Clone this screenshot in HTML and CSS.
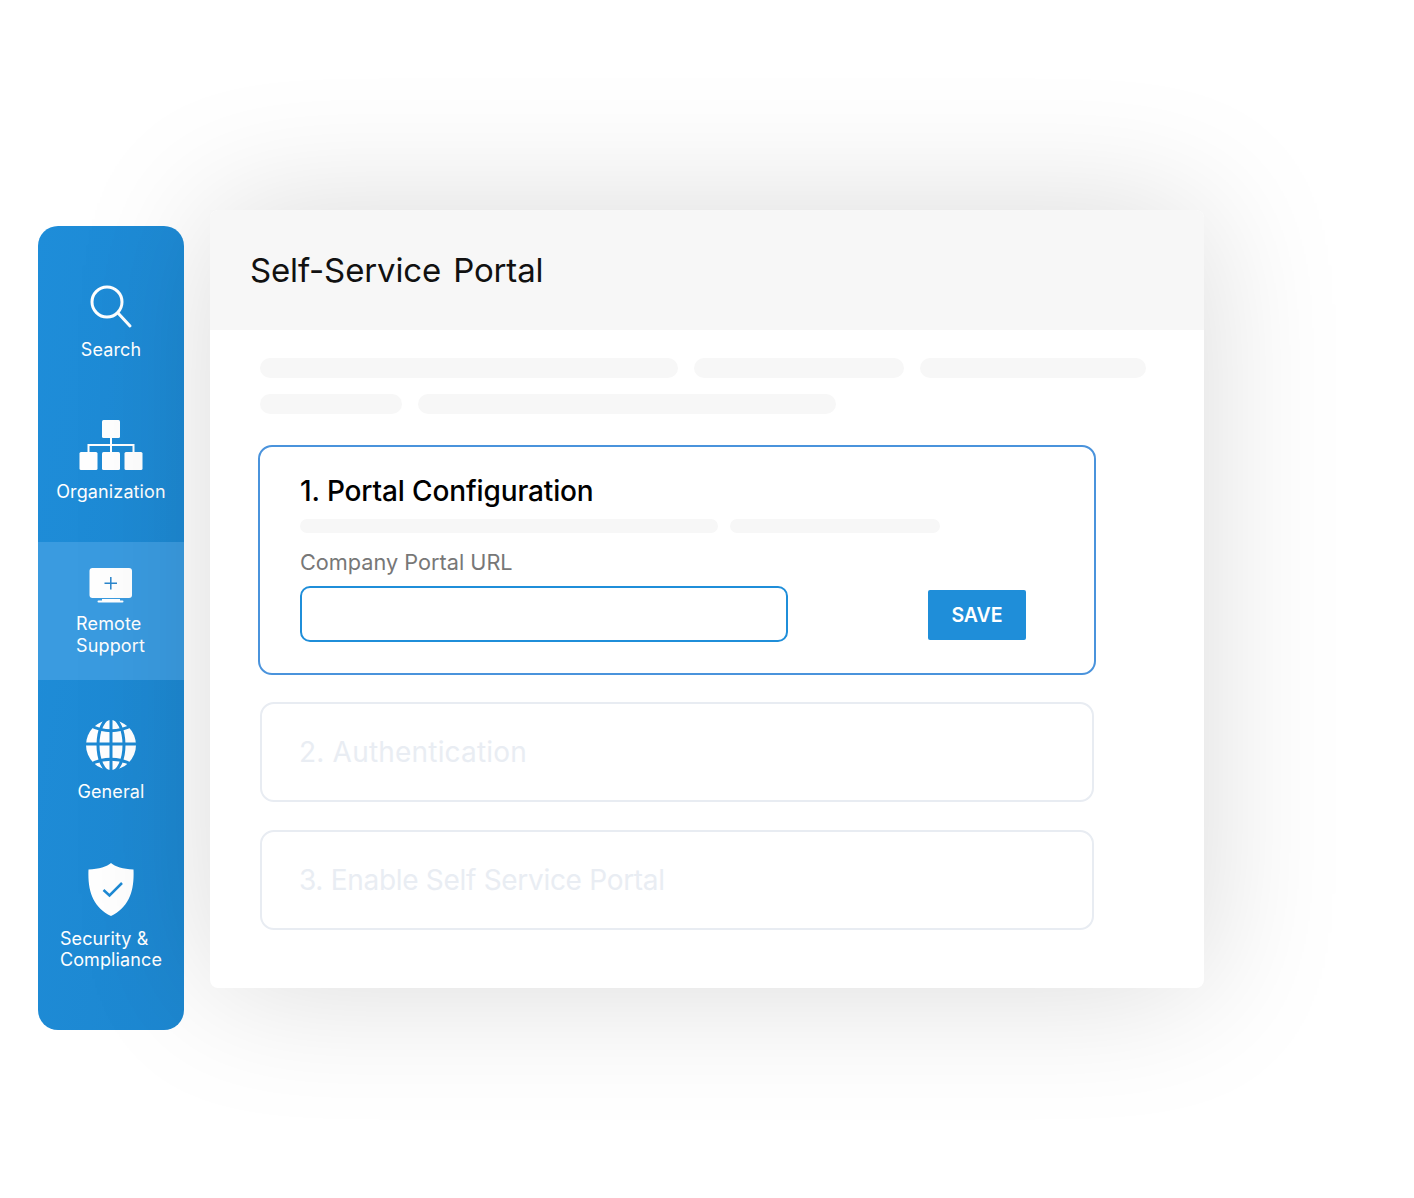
FILE: index.html
```html
<!DOCTYPE html>
<html lang="en">
<head>
    <meta charset="UTF-8">
    <title>Self-Service Portal</title>
    <meta name="viewport" content="width=device-width, initial-scale=1.0">
    <link rel="stylesheet" href="styles.css">
</head>
<body>
    <div class="sidebar">
        <div class="nav-item nav-search">
            <svg width="44" height="44" viewBox="0 0 44 44" fill="none" stroke="#fff" stroke-width="3" stroke-linecap="round">
                <circle cx="18" cy="17" r="15"/>
                <line x1="29" y1="28" x2="41" y2="41"/>
            </svg>
            <span>Search</span>
        </div>
        <div class="nav-item nav-org">
            <svg width="64" height="50" viewBox="0 0 64 50" fill="#fff">
                <rect x="23" y="0" width="18" height="18" rx="1.5"/>
                <rect x="0.5" y="32" width="18" height="18" rx="1.5"/>
                <rect x="23" y="32" width="18" height="18" rx="1.5"/>
                <rect x="45.500" y="32" width="18" height="18" rx="1.5"/>
                <path d="M32 18v14M9.500 32v-7h45v7" fill="none" stroke="#fff" stroke-width="2"/>
            </svg>
            <span>Organization</span>
        </div>
        <div class="nav-item nav-remote">
            <svg width="44" height="36" viewBox="0 0 44 36">
                <rect x="0.500" y="0" width="42.500" height="30" rx="3" fill="#fff"/>
                <rect x="13" y="31" width="18" height="2" fill="#fff"/>
                <rect x="8.500" y="32.500" width="26" height="2" rx="1" fill="#fff"/>
                <path d="M21.800 9v12.500M15.500 15.200h12.500" stroke="#2b86cc" stroke-width="1.500" fill="none"/>
            </svg>
            <span>Remote<br>Support</span>
        </div>
        <div class="nav-item nav-general">
            <svg width="52" height="52" viewBox="0 0 52 52">
                <circle cx="26" cy="26" r="25" fill="#fff"/>
                <g fill="none" stroke="#1e8ad4" stroke-width="3">
                    <ellipse cx="26" cy="26" rx="13" ry="27"/>
                    <line x1="26" y1="0" x2="26" y2="52"/>
                    <line x1="0" y1="25" x2="52" y2="25"/>
                    <path d="M5 6.500Q26 17 47 6.500"/>
                    <path d="M5 45.500Q26 35 47 45.500"/>
                </g>
            </svg>
            <span>General</span>
        </div>
        <div class="nav-item nav-security">
            <svg width="46" height="53" viewBox="0 0 46 53">
                <path d="M23 0C27 3.500 35 6 45.500 6.500C46.500 28 41 44 23 53C5 44 -0.500 28 0.500 6.500C11 6 19 3.500 23 0Z" fill="#fff"/>
                <path d="M15.500 27l6 5.500L34 20" fill="none" stroke="#1e8ad4" stroke-width="2.500"/>
            </svg>
            <span>Security &amp;<br>Compliance</span>
        </div>
    </div>

    <div class="panel">
        <div class="panel-header">Self-Service Portal</div>
        <div class="panel-body">
            <div class="skeleton-row">
                <div class="skeleton w-418"></div>
                <div class="skeleton w-210"></div>
                <div class="skeleton w-226"></div>
            </div>
            <div class="skeleton-row">
                <div class="skeleton w-142"></div>
                <div class="skeleton w-418"></div>
            </div>

            <div class="card card-active">
                <h2>1. Portal Configuration</h2>
                <div class="skeleton-row small">
                    <div class="skeleton w-418"></div>
                    <div class="skeleton w-210"></div>
                </div>
                <label for="portalUrl">Company Portal URL</label>
                <div class="url-row">
                    <input type="text" id="portalUrl">
                    <button class="save-button" type="button">SAVE</button>
                </div>
            </div>

            <div class="card card-off card-auth">2. Authentication</div>
            <div class="card card-off card-enable">3. Enable Self Service Portal</div>
        </div>
    </div>
</body>
</html>
```

FILE: styles.css
```css
html, body {
    height: 100%;
}

body {
    font-family: Inter, 'Noto Sans', sans-serif;
    background-color: #fff;
    margin: 0;
    height: 1198px;
    overflow: hidden;
    display: flex;
    align-items: flex-start;
}

.sidebar {
    width: 146px;
    height: 804px;
    margin: 226px 26px 0 38px;
    flex-shrink: 0;
    background: linear-gradient(100deg, #1e8dd9, #1d87d0);
    border-radius: 20px;
    overflow: hidden;
    color: #fff;
}

.nav-item {
    display: flex;
    flex-direction: column;
    align-items: center;
    font-size: 18px;
    line-height: 22px;
    letter-spacing: 0.12px;
    box-sizing: border-box;
}

.nav-item span {
    display: block;
}

.nav-search {
    height: 174px;
    padding-top: 59px;
}

.nav-search span {
    margin-top: 10px;
}

.nav-org {
    height: 142px;
    padding-top: 20px;
}

.nav-org span {
    margin-top: 11px;
}

.nav-remote {
    height: 138px;
    padding-top: 26px;
    background-color: #3a9be0;
}

.nav-remote span {
    margin-top: 9px;
    margin-right: 1px;
    text-align: left;
}

.nav-general {
    height: 150px;
    padding-top: 39px;
}

.nav-general span {
    margin-top: 10px;
}

.nav-security {
    padding-top: 33px;
}

.nav-security span {
    margin-top: 12px;
    line-height: 21px;
    text-align: left;
}

.panel {
    width: 994px;
    height: 778px;
    margin-top: 210px;
    flex-shrink: 0;
    background-color: #fff;
    border-radius: 8px;
    overflow: hidden;
    box-shadow: 0 0 140px rgba(0, 0, 0, 0.15);
}

.panel-header {
    height: 120px;
    padding-left: 40px;
    display: flex;
    align-items: center;
    background-color: #f7f7f7;
    color: #111;
    font-size: 33px;
    letter-spacing: -0.15px;
    word-spacing: 3px;
}

.panel-body {
    width: 834px;
    padding: 28px 0 0 50px;
}

.skeleton-row {
    display: flex;
    gap: 16px;
    width: 900px;
    margin-bottom: 16px;
}

.skeleton {
    height: 20px;
    background-color: #f7f7f7;
    border-radius: 10px;
}

.w-142 { width: 142px; }
.w-210 { width: 210px; }
.w-226 { width: 226px; }
.w-418 { width: 418px; }

.card {
    box-sizing: border-box;
    border-radius: 14px;
    background-color: #fff;
}

.card-active {
    height: 230px;
    margin: 31px -2px 27px;
    padding: 26px 40px 0;
    border: 2px solid #4a93dc;
}

.card-active h2 {
    margin: 0;
    font-size: 28px;
    line-height: 36px;
    font-weight: 500;
    letter-spacing: -0.13px;
    color: #000;
}

.skeleton-row.small {
    gap: 12px;
    margin: 10px 0 0;
}

.skeleton-row.small .skeleton {
    height: 14px;
    border-radius: 7px;
}

.card-active label {
    display: block;
    margin-top: 15px;
    font-size: 21.7px;
    line-height: 28px;
    color: #777;
}

.url-row {
    display: flex;
    align-items: center;
    margin-top: 10px;
}

input[type="text"] {
    width: 488px;
    height: 56px;
    box-sizing: border-box;
    border: 2px solid #1f8ed9;
    border-radius: 10px;
    background-color: #fff;
    outline: none;
}

.save-button {
    width: 98px;
    height: 50px;
    margin: 2px 0 0 140px;
    border: none;
    border-radius: 2px;
    background-color: #1f8ed9;
    color: #fff;
    font-family: Inter, 'Noto Sans', sans-serif;
    font-size: 19.5px;
    font-weight: 600;
}

.card-off {
    height: 100px;
    margin-bottom: 28px;
    padding-left: 37px;
    display: flex;
    align-items: center;
    border: 2px solid #e8ecf2;
    color: #e9edf3;
    font-size: 28px;
}

.card-auth {
    letter-spacing: 0.2px;
}

.card-enable {
    letter-spacing: -0.3px;
}
```
